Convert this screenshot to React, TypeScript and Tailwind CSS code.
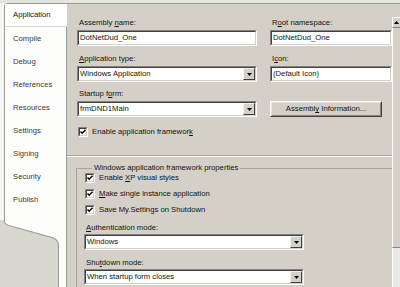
import React from "react";

const tabs = [
  "Application",
  "Compile",
  "Debug",
  "References",
  "Resources",
  "Settings",
  "Signing",
  "Security",
  "Publish",
];

function U({ children }: { children: React.ReactNode }) {
  return <span className="underline underline-offset-[1px]">{children}</span>;
}

function Label({ children }: { children: React.ReactNode }) {
  return <div className="h-[12px] leading-[12px] pl-[2px] whitespace-nowrap">{children}</div>;
}

// sunken 2px border, like the classic text box
function Sunken({ children, className = "" }: { children: React.ReactNode; className?: string }) {
  return (
    <div
      className={`h-[16px] border border-t-[#848284] border-l-[#848284] border-b-white border-r-white ${className}`}
    >
      <div className="h-full border border-t-[#404040] border-l-[#404040] border-b-[#d4d0c8] border-r-[#d4d0c8] bg-white flex items-center overflow-hidden">
        {children}
      </div>
    </div>
  );
}

function TextBox({ value }: { value: string }) {
  return (
    <Sunken>
      <span className="pl-[1px] whitespace-nowrap leading-[12px]">{value}</span>
    </Sunken>
  );
}

function DropButton() {
  return (
    <div className="w-[12px] h-full shrink-0 bg-[#d4d0c8] border border-t-[#f4f3f0] border-l-[#f4f3f0] border-b-[#404040] border-r-[#404040] flex items-center justify-center">
      <svg width="5" height="3" viewBox="0 0 5 3">
        <path d="M0 0H5L2.5 3Z" fill="#000" />
      </svg>
    </div>
  );
}

function Select({ value }: { value: string }) {
  return (
    <Sunken>
      <span className="pl-[1px] flex-1 whitespace-nowrap leading-[12px]">{value}</span>
      <DropButton />
    </Sunken>
  );
}

function Check({ children, className = "" }: { children: React.ReactNode; className?: string }) {
  return (
    <div className={`h-[11px] flex items-center gap-[4px] whitespace-nowrap ${className}`}>
      <div className="w-[10px] h-[10px] shrink-0 border border-t-[#848284] border-l-[#848284] border-b-white border-r-white">
        <div className="w-full h-full bg-white border border-t-[#404040] border-l-[#404040] border-b-[#d4d0c8] border-r-[#d4d0c8] flex items-center justify-center">
          <svg width="6" height="6" viewBox="0 0 6 6">
            <path d="M0.5 2.5L2.2 4.3L5.5 0.8" stroke="#000" strokeWidth="1.4" fill="none" />
          </svg>
        </div>
      </div>
      <span className="leading-[11px]">{children}</span>
    </div>
  );
}

export default function App() {
  return (
    <div className="w-[400px] h-[287px] overflow-hidden bg-[#d4d0c8] flex flex-col font-['Liberation_Sans',Arial,sans-serif] text-[7.7px] text-[#111]">
      <div className="h-[3px] shrink-0 bg-[#e6e4df]" />
      <div className="flex flex-1 min-h-0">
        {/* tab strip */}
        <div className="w-[67px] shrink-0 flex flex-col bg-[#f6f5f2]">
          <div className="ml-[4px] border-l border-t border-[#9c9a95] rounded-tl-[4px] bg-[#fdfdfc]">
            {tabs.map((t, i) => (
              <div
                key={t}
                className={
                  i === 0
                    ? "h-[23px] flex items-center pl-[8px] text-[#111] border-b border-[#d8d6d0] bg-white"
                    : "h-[23px] flex items-center pl-[8px] text-[#3a3a3a] border-r border-[#9c9a95]"
                }
              >
                {t}
              </div>
            ))}
            <div className="h-[9px] border-r border-[#9c9a95]" />
          </div>
          <svg className="flex-1 w-[67px]" viewBox="0 0 67 65" preserveAspectRatio="none">
            <rect x="0" y="0" width="67" height="65" fill="#fdfdfc" />
            <path d="M0 0H4.5V2Q5 4 8 5L52 17Q58.5 19 58.5 25V65H0Z" fill="#d9d6cf" />
            <path d="M4.5 0V2Q5 4 8 5L52 17Q58.5 19 58.5 25V65" stroke="#9c9a95" fill="none" />
            <path d="M66.5 0V65" stroke="#9c9a95" />
          </svg>
        </div>

        {/* property page */}
        <div className="flex-1 min-w-0 flex flex-col border-t border-[#9c9a95]">
          <div className="flex flex-1 min-h-0">
            <div className="flex-1 min-w-0 overflow-hidden">
              <div className="pl-[10px] pt-[13px] grid grid-cols-[180px_122px] gap-x-[13px]">
                <div>
                  <Label>
                    Assembly <U>n</U>ame:
                  </Label>
                  <div className="mt-[1px]">
                    <TextBox value="DotNetDud_One" />
                  </div>
                </div>
                <div>
                  <Label>
                    R<U>o</U>ot namespace:
                  </Label>
                  <div className="mt-[1px]">
                    <TextBox value="DotNetDud_One" />
                  </div>
                </div>

                <div className="mt-[7px]">
                  <Label>
                    <U>A</U>pplication type:
                  </Label>
                  <div className="mt-[1px]">
                    <Select value="Windows Application" />
                  </div>
                </div>
                <div className="mt-[7px]">
                  <Label>
                    I<U>c</U>on:
                  </Label>
                  <div className="mt-[1px]">
                    <TextBox value="(Default Icon)" />
                  </div>
                </div>

                <div className="mt-[6px]">
                  <Label>
                    Startup f<U>o</U>rm:
                  </Label>
                  <div className="mt-[1px]">
                    <Select value="frmDND1Main" />
                  </div>
                </div>
                <div className="mt-[6px] flex flex-col justify-end">
                  <div className="w-[112px] h-[16px] border border-t-white border-l-white border-b-[#404040] border-r-[#404040] bg-[#d4d0c8]">
                    <div className="h-full border border-t-[#e8e6e2] border-l-[#e8e6e2] border-b-[#848284] border-r-[#848284] flex items-center justify-center whitespace-nowrap">
                      <span>
                        Assembl<U>y</U> Information...
                      </span>
                    </div>
                  </div>
                </div>
              </div>

              <Check className="ml-[11px] mt-[9px]">
                Enable application framewor<U>k</U>
              </Check>

              <div className="mt-[18px] h-[2px] border-t border-b border-t-[#a6a39c] border-b-white" />

              <fieldset className="ml-[9px] mt-[7px] border-t border-l border-[#a6a39c] pl-[7px] pb-[8px]">
                <legend className="ml-[8px] px-[2px] leading-[8px] whitespace-nowrap">
                  Windows application framework properties
                </legend>
                <div className="flex flex-col gap-[5px] pl-[1px]">
                  <Check>
                    Enable <U>X</U>P visual styles
                  </Check>
                  <Check>
                    <U>M</U>ake single instance application
                  </Check>
                  <Check>Save My.Settings on Shutdown</Check>
                </div>
                <div className="w-[220px] mt-[7px]">
                  <Label>
                    <U>A</U>uthentication mode:
                  </Label>
                  <Select value="Windows" />
                  <div className="mt-[7px]">
                    <Label>
                      Shu<U>t</U>down mode:
                    </Label>
                  </div>
                  <Select value="When startup form closes" />
                </div>
              </fieldset>
            </div>

            {/* scrollbar */}
            <div className="w-[8px] shrink-0 flex flex-col pt-[13px]">
              <div className="h-[11px] border-l border-t border-white border-b border-b-[#848284] bg-[#d4d0c8] flex items-center justify-center">
                <svg width="5" height="3" viewBox="0 0 5 3">
                  <path d="M0 3H5L2.5 0Z" fill="#000" />
                </svg>
              </div>
              <div className="h-[220px] border-l border-white border-b border-b-[#848284] bg-[#d4d0c8]" />
              <div className="flex-1 bg-[#ebe9e5] border-l border-white" />
            </div>
          </div>
        </div>
      </div>
    </div>
  );
}
